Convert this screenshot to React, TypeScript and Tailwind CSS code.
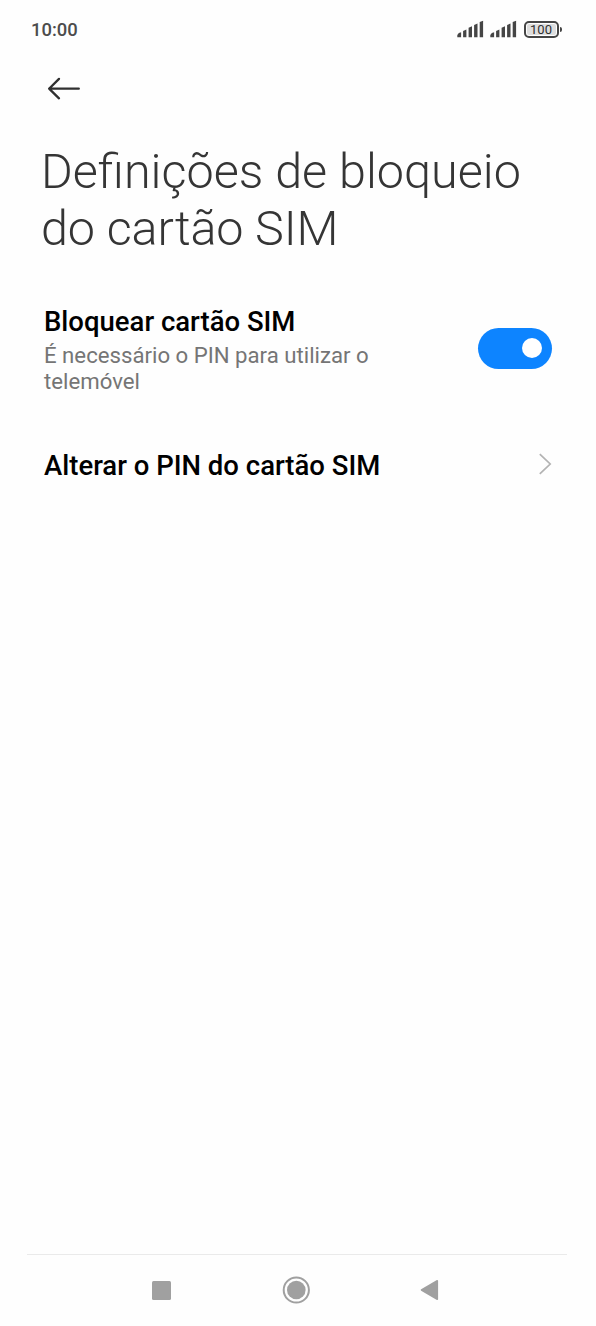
import React, { useState } from 'react';

const SignalIcon: React.FC = () => (
  <svg width="27" height="18" viewBox="0 0 27 18" fill="#454545" aria-hidden="true">
    <path d="M1.8 12.9 L4.1 12.3 V17.3 H0.3 V15 Z" />
    <path d="M6.1 10.9 L9.4 9.6 V17.3 H6.1 Z" />
    <path d="M11.6 7.7 L15 6.2 V17.3 H11.6 Z" />
    <path d="M17.1 4.9 L20.5 3.5 V17.3 H17.1 Z" />
    <path d="M22.7 2.1 L26.1 0.7 V17.3 H22.7 Z" />
  </svg>
);

const StatusBar: React.FC = () => (
  <div className="flex h-[58px] items-center justify-between pl-[31px] pr-[34.5px]">
    <span className="pt-px text-[18.4px] font-medium text-[#4c4c4c]">10:00</span>
    <div className="flex items-center">
      <SignalIcon />
      <div className="ml-1.5">
        <SignalIcon />
      </div>
      <div className="ml-[7px] flex items-center">
        <div className="flex h-[17px] w-[35px] rounded-[5px] border-2 border-[#454545] p-px">
          <div className="flex flex-1 items-center justify-center rounded-xs bg-[#dedede] text-[13px] leading-none text-[#303030]">
            100
          </div>
        </div>
        <div className="ml-px h-[5px] w-[2px] rounded-r-xs bg-[#454545]" />
      </div>
    </div>
  </div>
);

interface SwitchProps {
  checked: boolean;
  onChange: (checked: boolean) => void;
}

const Switch: React.FC<SwitchProps> = ({ checked, onChange }) => (
  <button
    type="button"
    role="switch"
    aria-checked={checked}
    onClick={() => onChange(!checked)}
    className={`flex h-[41px] w-[74px] items-center rounded-full px-[10.5px] ${
      checked ? 'justify-end bg-[#0d84ff]' : 'justify-start bg-[#e0e0e0]'
    }`}
  >
    <span className="size-5 rounded-full bg-white" />
  </button>
);

export default function App() {
  const [locked, setLocked] = useState(true);

  return (
    <div className="flex h-[1326px] w-[596px] flex-col overflow-hidden bg-[#fefefe] font-[Roboto,sans-serif]">
      <StatusBar />

      {/* Back button and page title */}
      <header>
        <button type="button" aria-label="Voltar" className="ml-[47px] mt-[19px] block">
          <svg width="33" height="23" viewBox="0 0 33 23" fill="none" stroke="#303030" strokeWidth="2.3" strokeLinecap="round" strokeLinejoin="round">
            <path d="M12 1.9 L2.1 11.7 L12 21.3 M2.1 11.7 H31.8" />
          </svg>
        </button>
        <h1 className="ml-[41px] mt-[43px] text-[48.5px] leading-[57px] font-light text-[#353535]">
          Definições de bloqueio
          <br />
          <span className="tracking-[-0.1px]">do cartão SIM</span>
        </h1>
      </header>

      <main className="flex-1 pl-11 pr-11">
        <div className="mt-[47px] flex h-[88px] items-center justify-between">
          <div className="pt-[3px]">
            <h2 className="text-[27.5px] leading-[32px] font-medium text-black">Bloquear cartão SIM</h2>
            <p className="mt-1 text-[22.2px] leading-[26px] text-[#757575]">
              É necessário o PIN para utilizar o
              <br />
              telemóvel
            </p>
          </div>
          <Switch checked={locked} onChange={setLocked} />
        </div>

        <div className="mt-14 flex h-8 items-center justify-between">
          <h2 className="pt-1 text-[27.5px] leading-[32px] font-medium text-black">Alterar o PIN do cartão SIM</h2>
          <svg width="14" height="22" viewBox="0 0 14 22" fill="none" stroke="#b3b3b3" strokeWidth="1.7" aria-hidden="true">
            <path d="M1.8 1.2 L12.2 11 L1.8 20.8" />
          </svg>
        </div>
      </main>

      {/* System navigation */}
      <nav className="ml-[27px] mr-[29px] flex h-[72px] items-center justify-between border-t border-[#eaeaea] pl-[125px] pr-[128px] pb-px">
        <div className="size-[19px] rounded-[1.5px] bg-[#a0a0a0]" />
        <svg width="28" height="28" viewBox="0 0 28 28" aria-hidden="true">
          <circle cx="14.3" cy="14" r="12.6" fill="none" stroke="#a0a0a0" strokeWidth="2" />
          <circle cx="14.3" cy="14" r="9.3" fill="#a0a0a0" />
        </svg>
        <svg width="19" height="22" viewBox="0 0 19 22" aria-hidden="true">
          <path d="M1.5 11 L17.3 1.8 V20.2 Z" fill="#a0a0a0" stroke="#a0a0a0" strokeWidth="1.6" strokeLinejoin="round" />
        </svg>
      </nav>
    </div>
  );
}
